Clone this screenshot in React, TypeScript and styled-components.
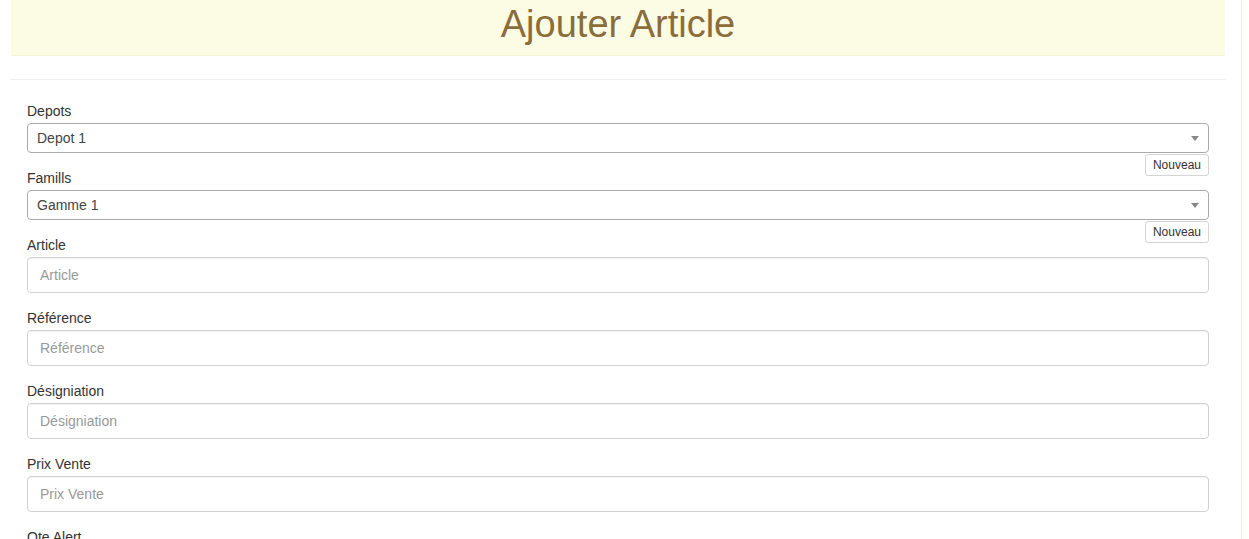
import React from "react";
import styled, { createGlobalStyle } from "styled-components";

const GlobalStyle = createGlobalStyle`
  html, body {
    margin: 0;
    padding: 0;
    background: #ffffff;
  }
  body {
    font-family: "Liberation Sans", Arial, Helvetica, sans-serif;
    font-size: 14px;
    line-height: 20px;
    color: #333333;
  }
  * { box-sizing: border-box; }
`;

const Page = styled.div`
  display: flex;
  align-items: stretch;
  min-height: 100vh;
`;

const Main = styled.main`
  width: 1214px;
  margin-left: 11px;
  flex-shrink: 0;
`;

const SideRule = styled.div`
  width: 1px;
  margin-left: 16px;
  background: #f4f1d6;
  flex-shrink: 0;
`;

const Header = styled.header`
  height: 56px;
  background: #fcfbe3;
  border-bottom: 1px solid #f6f2d6;
  display: flex;
  justify-content: center;
`;

const Title = styled.h1`
  margin: 0;
  padding-top: 2px;
  font-family: "Liberation Sans", Arial, Helvetica, sans-serif;
  font-weight: normal;
  font-size: 38px;
  line-height: 44px;
  color: #8a6d3b;
`;

const Divider = styled.hr`
  border: 0;
  height: 1px;
  background: #eeeeee;
  margin: 23px 0 21px;
`;

const Form = styled.form`
  padding: 0 16px;
`;

const Group = styled.div`
  margin-bottom: 15px;
  &::after {
    content: "";
    display: block;
    clear: both;
  }
`;

const SelectGroup = styled.div`
  margin-bottom: 15px;
`;

const Label = styled.label`
  display: block;
  margin-bottom: 2px;
  font-size: 14px;
  line-height: 20px;
  color: #333333;
`;

const SelectBox = styled.div`
  position: relative;
  height: 30px;
  border: 1px solid #aaaaaa;
  border-radius: 4px;
  background: #ffffff;
  padding-left: 9px;
  display: flex;
  align-items: center;
  color: #444444;
  font-size: 14px;
`;

const Arrow = styled.span`
  position: absolute;
  right: 9px;
  top: 50%;
  margin-top: -2px;
  width: 0;
  height: 0;
  border-style: solid;
  border-width: 5px 4px 0 4px;
  border-color: #888888 transparent transparent transparent;
`;

const NewButton = styled.button`
  float: right;
  margin-top: 1px;
  height: 22px;
  padding: 0 7px;
  border: 1px solid #d4d4d4;
  border-radius: 3px;
  background: #ffffff;
  color: #333333;
  font-family: "Liberation Sans", Arial, Helvetica, sans-serif;
  font-size: 12px;
  line-height: 20px;
  cursor: pointer;
`;

const Input = styled.input`
  display: block;
  width: 100%;
  height: 36px;
  padding: 0 12px;
  border: 1px solid #d2d2d2;
  border-radius: 4px;
  background: #ffffff;
  box-shadow: inset 0 1px 1px rgba(0, 0, 0, 0.05);
  font-family: "Liberation Sans", Arial, Helvetica, sans-serif;
  font-size: 14px;
  color: #555555;
  outline: none;
  &::placeholder {
    color: #999999;
  }
`;

type SelectFieldProps = { label: string; value: string };

const SelectField = ({ label, value }: SelectFieldProps) => (
  <SelectGroup>
    <Label>{label}</Label>
    <SelectBox>
      {value}
      <Arrow />
    </SelectBox>
    <NewButton type="button">Nouveau</NewButton>
  </SelectGroup>
);

const InputField = ({ label }: { label: string }) => (
  <Group>
    <Label>{label}</Label>
    <Input placeholder={label} />
  </Group>
);

export default function App() {
  return (
    <>
      <GlobalStyle />
      <Page>
        <Main>
          <Header>
            <Title>Ajouter Article</Title>
          </Header>
          <Divider />
          <Form onSubmit={(e) => e.preventDefault()}>
            <SelectField label="Depots" value="Depot 1" />
            <SelectField label="Famills" value="Gamme 1" />
            <InputField label="Article" />
            <InputField label="Référence" />
            <InputField label="Désigniation" />
            <InputField label="Prix Vente" />
            <InputField label="Qte Alert" />
          </Form>
        </Main>
        <SideRule />
      </Page>
    </>
  );
}
